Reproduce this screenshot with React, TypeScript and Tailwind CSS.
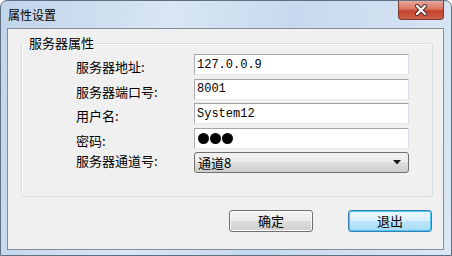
import React from "react";

const cjk = { fontFamily: '"Noto Sans CJK SC", "Noto Sans", sans-serif' };
const mono = { fontFamily: '"Liberation Mono", "DejaVu Sans Mono", monospace' };

function Label({ children, last }: { children: React.ReactNode; last?: boolean }) {
  return (
    <div
      className={`w-[118px] text-[13px] leading-[15px] text-black ${last ? "pt-[1px]" : "pt-[5px]"}`}
      style={cjk}
    >
      {children}
    </div>
  );
}

function TextBox({ children }: { children: React.ReactNode }) {
  return (
    <div className="w-[215px] h-[21px] bg-white border border-[#abadb3] border-t-[#a0a4ab] border-b-[#e3e9ef] border-r-[#dbdfe6] flex items-center pl-[2px] text-[12px] text-black" style={mono}>
      {children}
    </div>
  );
}

export default function App() {
  return (
    <div className="w-[452px] h-[256px] overflow-hidden bg-white">
      <div className="w-[452px] h-[256px] rounded-t-[7px] border border-[#5e6f82] bg-[linear-gradient(100deg,#c0d4eb_0%,#d9e6f4_35%,#c6d9ee_60%,#dbe7f4_100%)] flex flex-col">
        {/* title bar */}
        <div className="h-[27px] flex items-start">
          <div className="pl-[7px] pt-[7px] text-[12px] leading-[14px] text-black" style={cjk}>
            属性设置
          </div>
          <div className="ml-auto mr-[7px] w-[46px] h-[19px] rounded-b-[4px] border border-t-0 border-[#7a3a33] bg-[linear-gradient(180deg,#e9a99a_0%,#d9735f_45%,#c4432c_55%,#d0604a_100%)] flex items-center justify-center">
            <svg width="14" height="12" viewBox="0 0 14 12">
              <path d="M3 2 L11 10 M11 2 L3 10" stroke="#4a2a25" strokeWidth="4" strokeLinecap="round" />
              <path d="M3 2 L11 10 M11 2 L3 10" stroke="#ffffff" strokeWidth="2.2" strokeLinecap="round" />
            </svg>
          </div>
        </div>
        {/* client area */}
        <div className="ml-[6px] mr-[7px] h-[222px] border border-[#7f8d9c] bg-[#f0f0f0] flex flex-col">
          {/* group box */}
          <div className="relative ml-[13px] mt-[14px] mr-[10px] h-[154px] rounded-[3px] border border-[#d5dfe5] shadow-[inset_1px_1px_0_#ffffff]">
            <div className="absolute left-[5px] top-[-10px] px-[2px] bg-[#f0f0f0] text-[13px] leading-[18px] text-black" style={cjk}>
              服务器属性
            </div>
            <div className="pl-[54px] pt-[10px] flex flex-col gap-[3.5px]">
              <div className="flex items-start">
                <Label>服务器地址:</Label>
                <TextBox>127.0.0.9</TextBox>
              </div>
              <div className="flex items-start">
                <Label>服务器端口号:</Label>
                <TextBox>8001</TextBox>
              </div>
              <div className="flex items-start">
                <Label>用户名:</Label>
                <TextBox>System12</TextBox>
              </div>
              <div className="flex items-start">
                <Label>密码:</Label>
                <TextBox>
                  <div className="flex gap-[1px] pl-[1px]">
                    <span className="w-[11px] h-[11px] rounded-full bg-black" />
                    <span className="w-[11px] h-[11px] rounded-full bg-black" />
                    <span className="w-[11px] h-[11px] rounded-full bg-black" />
                  </div>
                </TextBox>
              </div>
              <div className="flex items-start">
                <Label last>服务器通道号:</Label>
                <div className="w-[215px] h-[21px] rounded-[3px] border border-[#707070] bg-[linear-gradient(180deg,#f2f2f2_0%,#ebebeb_50%,#dddddd_50%,#cfcfcf_100%)] flex items-center pl-[3px] pr-[7px]">
                  <span className="text-[13px] leading-[15px] text-black" style={cjk}>
                    通道8
                  </span>
                  <svg className="ml-auto" width="8" height="5" viewBox="0 0 8 5">
                    <path d="M0 0 H8 L4 4.5 Z" fill="#1a1a1a" />
                  </svg>
                </div>
              </div>
            </div>
          </div>
          {/* buttons */}
          <div className="mt-[13px] flex justify-end gap-[35px] mr-[11px]">
            <div className="w-[84px] h-[22px] rounded-[3px] border border-[#707070] bg-[linear-gradient(180deg,#f2f2f2_0%,#ebebeb_50%,#dddddd_50%,#cfcfcf_100%)] shadow-[inset_0_0_0_1px_#fcfcfc] flex items-center justify-center text-[13px] text-black" style={cjk}>
              确定
            </div>
            <div className="w-[84px] h-[22px] rounded-[3px] border border-[#3c7fb1] bg-[linear-gradient(180deg,#eaf6fd_0%,#d9f0fc_50%,#bee6fd_50%,#a7d9f5_100%)] shadow-[inset_0_0_0_1px_#48c6f5] flex items-center justify-center text-[13px] text-black" style={cjk}>
              退出
            </div>
          </div>
        </div>
      </div>
    </div>
  );
}
